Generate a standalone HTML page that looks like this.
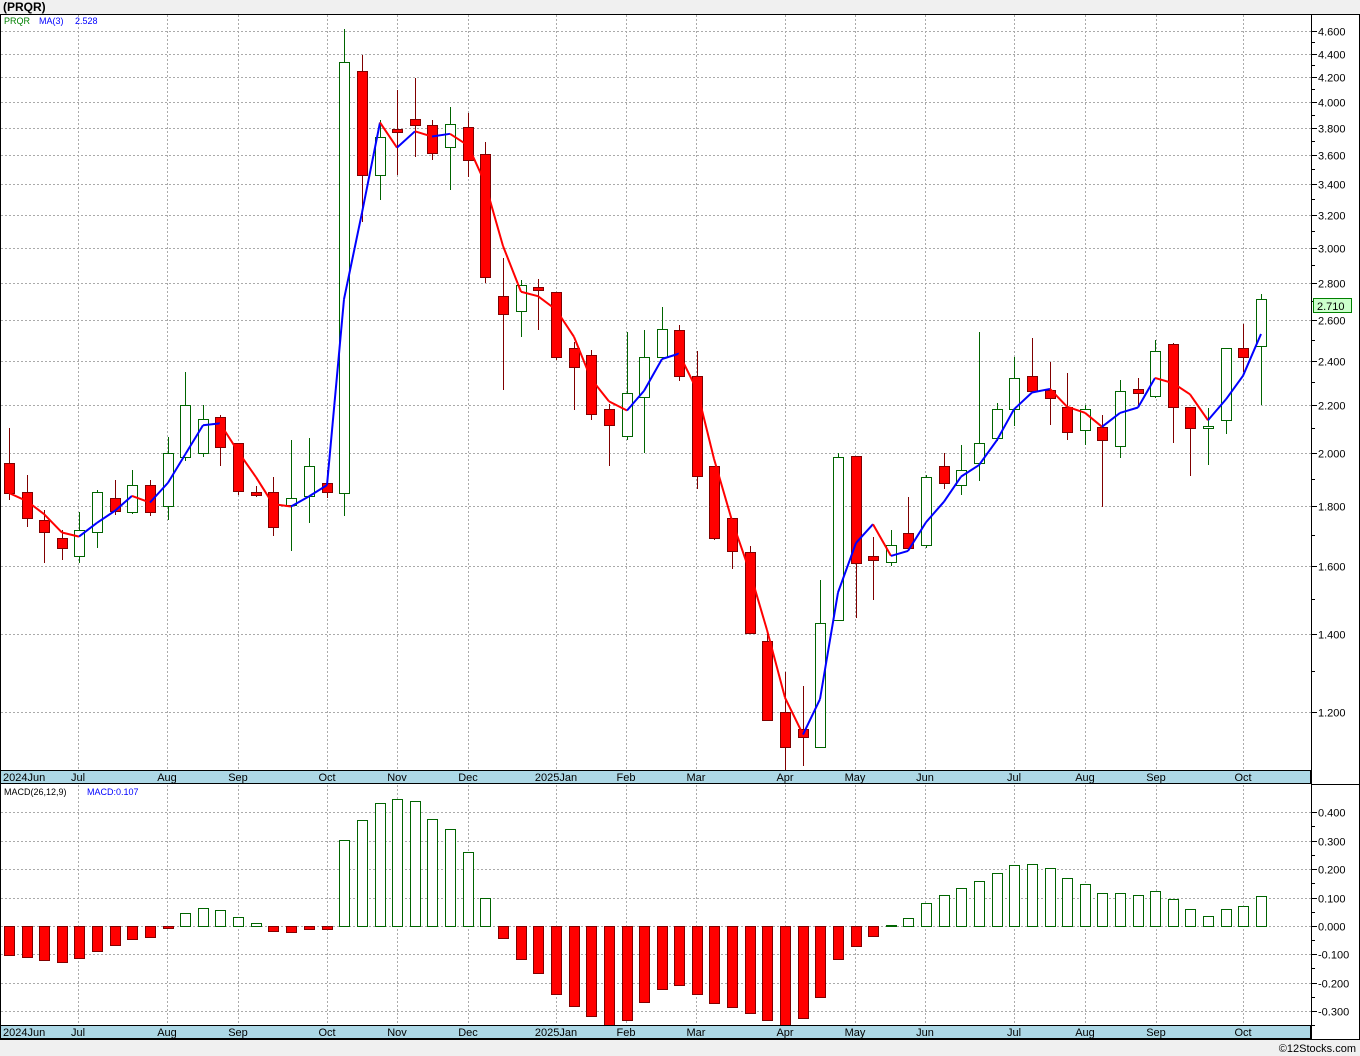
<!DOCTYPE html>
<html><head><meta charset="utf-8"><style>
html,body{margin:0;padding:0;background:#f0f0f0;width:1360px;height:1056px;overflow:hidden}
svg{display:block;font-family:"Liberation Sans",sans-serif}
</style></head><body>
<svg id="s" width="1360" height="1056" xmlns="http://www.w3.org/2000/svg">
<rect x="0" y="0" width="1360" height="1056" fill="#f0f0f0"/>
<text x="3" y="11" font-size="12" font-weight="bold" fill="#000">(PRQR)</text>
<rect x="0.5" y="14.5" width="1359" height="1025" fill="#fff" stroke="#000"/>
<g id="g"></g>
<rect x="0.5" y="770.5" width="1310" height="13" fill="#add8e6" stroke="#000"/>
<rect x="0.5" y="1025.5" width="1310" height="13" fill="#add8e6" stroke="#000"/>
<line x1="1311.5" y1="14" x2="1311.5" y2="1040" stroke="#000"/>
<line x1="1311" y1="784.5" x2="1360" y2="784.5" stroke="#000"/>
<text x="4" y="24" font-size="9" fill="#008000">PRQR</text>
<text x="39" y="24" font-size="9" fill="#0000ff">MA(3)</text>
<text x="75" y="24" font-size="9" fill="#0000ff">2.528</text>
<text x="4" y="795" font-size="9" fill="#000">MACD(26,12,9)</text>
<text x="87" y="795" font-size="9" fill="#0000ff">MACD:0.107</text>
<text x="1356" y="1052" font-size="11" fill="#000" text-anchor="end">©12Stocks.com</text>
</svg>
<script>
const NS="http://www.w3.org/2000/svg",g=document.getElementById('g'),svg=document.getElementById('s');
function el(t,a,p){const e=document.createElementNS(NS,t);for(const k in a)e.setAttribute(k,a[k]);(p||g).appendChild(e);return e}
function Y(p){return 31+(Math.log(4.6)-Math.log(p))*506.7}
function P(y){return Math.exp(Math.log(4.6)-(y-31)/506.7)}
const months=[[78,'Jul'],[167,'Aug'],[238,'Sep'],[327,'Oct'],[397,'Nov'],[468,'Dec'],[556,'2025Jan'],[626,'Feb'],[696,'Mar'],[785,'Apr'],[855,'May'],[925,'Jun'],[1014,'Jul'],[1085,'Aug'],[1156,'Sep'],[1243,'Oct']];
const dash={stroke:'#aaa','stroke-dasharray':'2,2','stroke-width':1};
months.forEach(m=>{el('line',Object.assign({x1:m[0]+.5,y1:15,x2:m[0]+.5,y2:770},dash));el('line',Object.assign({x1:m[0]+.5,y1:785,x2:m[0]+.5,y2:1025},dash));});
const prices=[4.6,4.4,4.2,4.0,3.8,3.6,3.4,3.2,3.0,2.8,2.6,2.4,2.2,2.0,1.8,1.6,1.4,1.2];
prices.forEach(p=>{const y=Math.round(Y(p))+.5;el('line',Object.assign({x1:1,y1:y,x2:1311,y2:y},dash));el('line',{x1:1311,y1:y,x2:1317,y2:y,stroke:'#000'});el('text',{x:1318,y:y+4,'font-size':11,fill:'#000'}).textContent=p.toFixed(3);});
for(let i=0;i<prices.length-1;i++){const y=Math.round(Y((prices[i]+prices[i+1])/2))+.5;el('line',{x1:1311,y1:y,x2:1315,y2:y,stroke:'#000'});}
const mv=[0.4,0.3,0.2,0.1,0,-0.1,-0.2,-0.3];
mv.forEach(v=>{const y=Math.round(926-v*284)+.5;el('line',Object.assign({x1:1,y1:y,x2:1311,y2:y},dash));el('line',{x1:1311,y1:y,x2:1317,y2:y,stroke:'#000'});el('text',{x:1318,y:y+4,'font-size':11,fill:'#000'}).textContent=v.toFixed(3);el('line',{x1:1311,y1:y+14,x2:1315,y2:y+14,stroke:'#000'});});
const C=[[9,463,493,428,500,0],[27,492,518,475,527,0],[44,520,532,510,563,0],[62,538,548,530,560,0],[79,530,556,512,563,1],[97,492,532,490,548,1],[115,498,511,480,515,0],[132,485,512,470,514,1],[150,485,512,480,516,0],[168,453,506,437,520,1],[185,405,457,372,461,1],[203,419,453,405,457,1],[220,417,447,415,466,0],[238,443,491,443,495,0],[256,492,495,486,497,0],[273,492,527,477,536,0],[291,498,505,440,551,1],[309,466,496,438,523,1],[327,483,492,470,498,0],[344,62,493,29,516,1],[362,71,175,55,222,0],[380,137,175,120,200,1],[397,129,132,90,175,0],[415,119,125,78,157,0],[432,125,153,120,160,0],[450,124,147,107,190,1],[468,127,160,113,177,0],[485,154,277,142,283,0],[503,296,314,258,390,0],[521,285,311,280,337,1],[538,287,290,279,330,0],[556,292,357,292,360,0],[574,348,367,342,410,0],[591,355,414,350,420,0],[609,409,425,404,466,0],[627,393,436,332,440,1],[644,357,397,330,453,1],[662,329,357,307,357,1],[679,330,376,325,381,0],[697,376,476,351,489,0],[714,466,538,466,540,0],[732,518,551,518,569,0],[750,552,633,546,633,0],[767,641,720,632,720,0],[785,712,747,672,770,0],[803,729,737,686,766,0],[820,623,747,580,748,1],[838,457,620,453,620,1],[856,456,563,456,618,0],[873,556,560,537,600,0],[891,545,562,530,566,1],[908,533,548,497,550,0],[926,477,545,475,548,1],[944,466,483,453,489,0],[961,470,485,445,495,1],[979,443,463,332,481,1],[997,409,438,403,441,1],[1014,378,409,357,426,1],[1032,376,391,338,392,0],[1050,390,398,362,425,0],[1067,407,432,373,440,0],[1085,409,430,405,445,1],[1102,427,440,415,507,0],[1120,391,446,380,458,1],[1138,389,393,378,406,0],[1155,351,396,340,398,1],[1173,344,407,343,443,0],[1190,407,428,408,476,0],[1208,426,428,408,465,1],[1226,348,420,348,434,1],[1243,348,357,324,372,0],[1261,299,346,294,405,1]];
C.forEach(c=>{const col=c[5]?'#006400':'#800000';el('line',{x1:c[0]+.5,y1:c[3],x2:c[0]+.5,y2:c[4],stroke:col});el('rect',{x:c[0]-4.5,y:c[1]+.5,width:10,height:Math.max(c[2]-c[1],2),fill:c[5]?'#fff':'#ff0000',stroke:col});});
const cl=C.map(c=>P(c[5]?c[1]:c[2]));
let prev=null;
for(let i=0;i<cl.length;i++){const a=cl[Math.max(0,i-2)],b=cl[Math.max(0,i-1)];const m=(a+b+cl[i])/3;const pt=[C[i][0],Y(m)];if(prev){el('line',{x1:prev[0],y1:prev[1],x2:pt[0],y2:pt[1],stroke:pt[1]<prev[1]?'#0000ff':'#ff0000','stroke-width':2});}prev=pt;}
el('rect',{x:1313.5,y:298.5,width:38,height:14,fill:'#ccffcc',stroke:'#008000'});
el('text',{x:1317,y:310,'font-size':11,fill:'#000'}).textContent='2.710';
const M=[955,957,960,962,958,951,945,939,937,928,913,908,910,917,923,931,932,929,929,840,820,803,799,801,819,829,852,898,938,959,973,994,1006,1016,1025,1020,1002,989,985,994,1003,1007,1013,1020,1025,1018,997,959,946,936,925,918,903,895,888,881,873,865,864,868,878,884,893,893,895,891,899,909,916,909,906,896];
M.forEach((v,i)=>{const x=C[i][0]-4.5,up=v<926;el('rect',{x:x,y:(up?v:926)+.5,width:10,height:Math.abs(v-926)||1,fill:up?'#fff':'#ff0000',stroke:up?'#006400':'#800000'});});
[[770,777],[1025,1032]].forEach(r=>{el('text',{x:3,y:r[1]+4,'font-size':11,fill:'#000'},svg).textContent='2024Jun';months.forEach(m=>{el('text',{x:m[0],y:r[1]+4,'font-size':11,fill:'#000','text-anchor':'middle'},svg).textContent=m[1];});});
</script>
</body></html>
